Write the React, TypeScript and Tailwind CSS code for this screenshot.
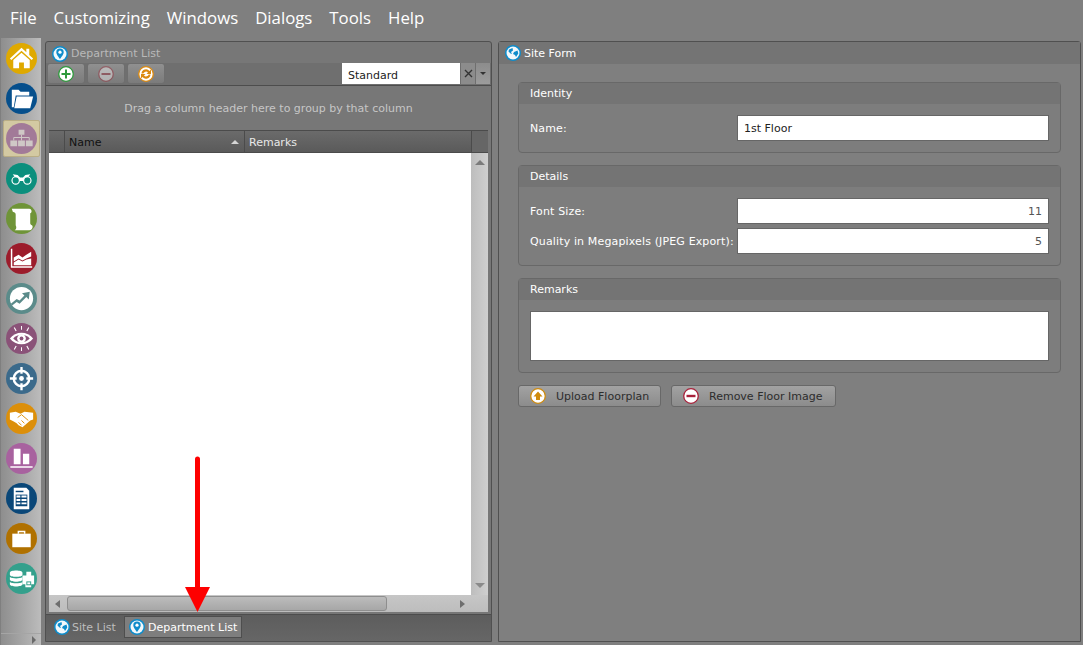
import type { ReactNode } from "react";

const menuItems = ["File", "Customizing", "Windows", "Dialogs", "Tools", "Help"];

function Circle({ color, children }: { color: string; children: ReactNode }) {
  return (
    <svg width="31" height="31" viewBox="0 0 32 32" className="block">
      <circle cx="16" cy="16" r="16" fill={color} />
      {children}
    </svg>
  );
}

const navIcons: ReactNode[] = [
  <Circle color="#dfa900" key="home">
    <path d="M4 16 16 5l5 4.500V6h3v6.500l4 3.500-1.500 1.500L16 8 5.500 17.500Z" fill="#fff" />
    <path d="M7.500 17.500 16 10l8.500 7.500V26H18.500v-6h-5v6H7.500Z" fill="#fff" />
  </Circle>,
  <Circle color="#064f8c" key="folder">
    <path d="M6 7h7l2 2h9v4H10L8 25H6Z" fill="#fff" />
    <path d="M11 14h17l-3 12H8.500Z" fill="#fff" />
  </Circle>,
  <Circle color="#a27a98" key="org">
    <path d="M13 7h6v5h-6ZM4.500 18h7v6h-7ZM12.500 18h7v6h-7ZM20.500 18h7v6h-7Z" fill="#cfc8c6" />
    <path d="M15.500 12h1v3h-1ZM8 14.500h16v1H8ZM7.500 15h1v3h-1ZM15.500 15h1v3h-1ZM23.500 15h1v3h-1Z" fill="#cfc8c6" />
  </Circle>,
  <Circle color="#0b8f7d" key="binoculars">
    <circle cx="10" cy="18" r="3.800" fill="none" stroke="#fff" strokeWidth="1.200" />
    <circle cx="22" cy="18" r="3.800" fill="none" stroke="#fff" strokeWidth="1.200" />
    <path d="M7 11.500l5 1 2.500 2.500h3l2.500-2.500 5-1-2 3-3.500.5-1.500 3.500h-4L12.500 15 9 14.500Z" fill="#fff" />
  </Circle>,
  <Circle color="#6f9438" key="scroll">
    <path d="M6 6h18c3 0 3 4.500 1 4.500V21c0 2 2.500 1.500 2.500 3.500S26 28 24 28H9c2-1 2-3 1-5v-11c0-2-1-2-3-3Z" fill="#fff" />
  </Circle>,
  <Circle color="#9c1c2b" key="area-chart">
    <path d="M5 6h1.500v18H27v1.500H5Z" fill="#fff" />
    <path d="M8 15l5-3 4 3 4-3 5-3v5l-5 2-4 2-4-2-5 3Z" fill="#fff" />
    <path d="M8 23v-3l5-3 4 2 4-2 5-1v7Z" fill="#fff" />
  </Circle>,
  <Circle color="#5b8b8a" key="trend">
    <circle cx="16" cy="16" r="12" fill="#fff" />
    <path d="M5 21.500l6-5 3 1.500 5-5-2.500-2.500 8-1.500-1 8-2.500-2.500-7 7-3-2-5 4Z" fill="#5b8b8a" />
  </Circle>,
  <Circle color="#8a5278" key="eye">
    <path d="M4 16c6-8 18-8 24 0-6 8-18 8-24 0Z" fill="#fff" />
    <path d="M7.500 16c4-5 13-5 17 0-4 5-13 5-17 0Z" fill="#8a5278" />
    <circle cx="16" cy="16" r="4.500" fill="#fff" />
    <circle cx="16" cy="16" r="2" fill="#8a5278" />
    <path d="M15.500 3h1v4h-1ZM8 5l1-.5 2 3.500-1 .5ZM24 5l-1-.5-2 3.500 1 .5ZM15.500 25h1v4h-1ZM8 27l1 .5 2-3.500-1-.5ZM24 27l-1 .5-2-3.500 1-.5Z" fill="#fff" />
  </Circle>,
  <Circle color="#3b6a8b" key="target">
    <circle cx="16" cy="16" r="8" fill="none" stroke="#fff" strokeWidth="2.500" />
    <circle cx="16" cy="16" r="2.500" fill="#fff" />
    <path d="M14.800 4h2.400v7h-2.400ZM14.800 21h2.400v7h-2.400ZM4 14.800h7v2.400H4ZM21 14.800h7v2.400h-7Z" fill="#fff" />
  </Circle>,
  <Circle color="#dc8f0a" key="handshake">
    <path d="M4 10l6-1 5 2 4-2 9 1v7l-3 1-8 7-2-1-2-1-2-2-3-2-4-2Z" fill="#fff" />
    <path d="M12 15l4-3 7 6M13 20l3 3M16 18l3 3" fill="none" stroke="#dc8f0a" strokeWidth="1" />
  </Circle>,
  <Circle color="#a8629f" key="bars">
    <path d="M8 6h7v16H8ZM17.500 11H24v11h-6.500ZM4.500 24h23v1.500h-23Z" fill="#fff" />
  </Circle>,
  <Circle color="#0a4778" key="table">
    <path d="M8 5h13l3 3v19H8Z" fill="#fff" />
    <path d="M10 12h12v12H10Z" fill="#0a4778" />
    <path d="M10.800 13h4v2h-4ZM16 13h5.200v2H16ZM10.800 16.500h4v2h-4ZM16 16.500h5.200v2H16ZM10.800 20h4v2h-4ZM16 20h5.200v2H16Z" fill="#fff" />
    <path d="M10 8h8v1.500h-8Z" fill="#0a4778" />
  </Circle>,
  <Circle color="#b07100" key="briefcase">
    <path d="M12 8h8v3h-1.500V9.500h-5V11H12Z" fill="#fff" />
    <path d="M6.500 11h19v14h-19Z" fill="#fff" />
  </Circle>,
  <Circle color="#34a08c" key="db-print">
    <path d="M4 10c0-3 13-3 13 0v2c0 3-13 3-13 0ZM4 14.500c3 2 10 2 13 0V17c0 3-13 3-13 0ZM4 19.500c3 2 10 2 13 0V22c0 3-13 3-13 0Z" fill="#fff" />
    <path d="M21 9h5v4h3v9h-3v3h-6v-3h-3v-9h4Z" fill="#fff" />
    <path d="M21 19h5v4h-5Z" fill="#34a08c" />
    <path d="M22 20h3v2h-3Z" fill="#fff" />
  </Circle>,
];

function PinBadge() {
  return (
    <svg width="16" height="16" viewBox="0 0 16 16" className="block shrink-0">
      <circle cx="8" cy="8" r="8" fill="#0e8ccb" />
      <circle cx="8" cy="8" r="6.500" fill="#f2f8fb" />
      <path d="M8 2.500a3.700 3.700 0 0 1 3.700 3.700C11.700 8.500 9 11.500 8 13c-1-1.500-3.700-4.500-3.700-6.800A3.700 3.700 0 0 1 8 2.500Z" fill="#0e8ccb" />
      <circle cx="8" cy="6.200" r="1.600" fill="#fff" />
    </svg>
  );
}

function GlobeBadge() {
  return (
    <svg width="16" height="16" viewBox="0 0 16 16" className="block shrink-0">
      <circle cx="8" cy="8" r="8" fill="#0e8ccb" />
      <circle cx="8" cy="8" r="6.500" fill="#f2f8fb" />
      <path d="M4 4.500 7.500 3 8 5.500 6 7 7 9 5.500 8.500 3.500 6.500ZM9 7l3.500-1.500.8 3-2.300 3.500-1-2L8 9Z" fill="#0e8ccb" />
    </svg>
  );
}

function RoundIcon({ color, children }: { color: string; children: ReactNode }) {
  return (
    <svg width="16" height="16" viewBox="0 0 16 16" className="block">
      <circle cx="8" cy="8" r="7.300" fill="#fff" stroke={color} strokeWidth="1.300" />
      {children}
    </svg>
  );
}

function ToolButton({ children, dim }: { children: ReactNode; dim?: boolean }) {
  return (
    <div className="flex h-[21px] w-[38px] items-center justify-center rounded-[3px] border border-[#6e6e6e] bg-gradient-to-b from-[#909090] to-[#7b7b7b]">
      <div className={dim ? "opacity-40" : ""}>{children}</div>
    </div>
  );
}

function Fieldset({
  title,
  className,
  children,
}: {
  title: string;
  className: string;
  children: ReactNode;
}) {
  return (
    <section className={`rounded-[4px] border border-[#686868] bg-[#7d7d7d] ${className}`}>
      <h2 className="flex h-[21px] items-center bg-[#747474] pl-[11px] pt-[2px] text-[11px] font-normal text-white">
        {title}
      </h2>
      {children}
    </section>
  );
}

function FormRow({ label, value, right }: { label: string; value: string; right?: boolean }) {
  return (
    <div className="flex h-[26px] items-center pl-[11px] pr-[11px]">
      <label className="w-[207px] whitespace-nowrap pt-[2px] text-[11px] tracking-[0.14px] text-white">
        {label}
      </label>
      <div
        className={`flex h-[26px] flex-1 items-center border border-[#666] bg-white px-[6px] pt-[2px] text-[11px] ${right ? "justify-end text-[#555]" : "text-[#222]"}`}
      >
        {value}
      </div>
    </div>
  );
}

function ActionButton({
  icon,
  label,
  className,
}: {
  icon: ReactNode;
  label: string;
  className: string;
}) {
  return (
    <button
      className={`flex h-[22px] items-center rounded-[3px] border border-[#686868] bg-gradient-to-b from-[#a2a2a2] to-[#8c8c8c] pl-[11px] text-[11px] text-[#2d2d2d] ${className}`}
    >
      {icon}
      <span className="ml-[10px] whitespace-nowrap pt-[2px]">{label}</span>
    </button>
  );
}

export default function App() {
  return (
    <div className="relative flex h-[645px] w-[1083px] flex-col overflow-hidden bg-[#7f7f7f] font-['DejaVu_Sans',sans-serif]">
      <nav className="flex h-[38px] shrink-0 items-center gap-[17px] pl-[10px] pb-[2px] font-['Open_Sans',sans-serif] text-[16.8px] text-white">
        {menuItems.map((m) => (
          <span key={m}>{m}</span>
        ))}
      </nav>

      <div className="flex min-h-0 flex-1">
        <aside className="ml-px flex w-[40px] shrink-0 flex-col bg-gradient-to-r from-[#8e8e8e] to-[#bcbcbc]">
          <div className="flex flex-1 flex-col items-center">
            {navIcons.map((icon, i) => (
              <div key={i} className="flex h-[40px] w-[38px] items-center justify-center">
                <div
                  className={`flex items-center justify-center ${i === 2 ? "h-[37px] w-[37px] rounded-[2px] border border-[#b9ad85] bg-[#d3c9a2]" : ""}`}
                >
                  {icon}
                </div>
              </div>
            ))}
          </div>
          <div className="flex h-[12px] items-center justify-end border-t border-[#a5a5a5] pr-[5px]">
            <div className="h-0 w-0 border-y-[4px] border-l-[4px] border-y-transparent border-l-[#6a6a6a]" />
          </div>
        </aside>

        <main className="flex min-w-0 flex-1 gap-[6px] pl-[4px] pr-[2px] pt-[3px] pb-[3px]">
          {/* left panel */}
          <section className="flex w-[447px] flex-col rounded-t-[3px] border border-[#505050] bg-[#777]">
            <header className="flex h-[21px] shrink-0 items-center gap-[3px] pl-[6px] pt-[2px] text-[11px] text-[#b9b9b9]">
              <PinBadge />
              <span className="pt-[2px]">Department List</span>
            </header>
            <div className="flex h-[22px] shrink-0 items-start bg-[#6f6f6f] pl-px pr-px">
              <div className="flex gap-[2px]">
                <ToolButton>
                  <RoundIcon color="#2e9a3c">
                    <path d="M7 3.500h2V7h3.500v2H9v3.500H7V9H3.500V7H7Z" fill="#2e9a3c" />
                  </RoundIcon>
                </ToolButton>
                <ToolButton dim>
                  <RoundIcon color="#9c2030">
                    <path d="M3.500 7h9v2h-9Z" fill="#9c2030" />
                  </RoundIcon>
                </ToolButton>
                <ToolButton>
                  <RoundIcon color="#dc8a10">
                    <path d="M3.500 7.500A4.500 4.500 0 0 1 11.500 5L13 3.500V8H8.500L10 6.500A2.800 2.800 0 0 0 5.300 7.500ZM12.500 8.500A4.500 4.500 0 0 1 4.500 11L3 12.500V8h4.500L6 9.500A2.800 2.800 0 0 0 10.700 8.500Z" fill="#dc8a10" />
                  </RoundIcon>
                </ToolButton>
              </div>
              <div className="ml-auto flex h-[21px] items-stretch">
                <div className="flex w-[118px] items-center bg-white pl-[6px] pt-[5px] text-[11px] text-[#222]">
                  Standard
                </div>
                <div className="ml-px flex w-[14px] items-center justify-center bg-[#8c8c8c] text-[#333]">
                  <svg width="9" height="9" viewBox="0 0 9 9">
                    <path d="M1 1l7 7M8 1 1 8" stroke="#333" strokeWidth="1.400" />
                  </svg>
                </div>
                <div className="ml-px flex w-[14px] items-center justify-center bg-gradient-to-b from-[#8c8c8c] to-[#9c9c9c]">
                  <div className="h-0 w-0 border-x-[3px] border-t-[3px] border-x-transparent border-t-[#333]" />
                </div>
              </div>
            </div>
            <div className="flex min-h-0 flex-1 flex-col border-y border-[#4d4d4d] px-[3px] pb-[2px]">
              <div className="flex h-[44px] shrink-0 items-center justify-center pt-[2px] text-[11px] text-[#c6c6c6]">
                Drag a column header here to group by that column
              </div>
              <div className="flex h-[23px] shrink-0 border-y border-[#4b4b4b] bg-gradient-to-b from-[#6b6b6b] to-[#5a5a5a] text-[11px]">
                <div className="w-[16px] border-r border-[#4b4b4b]" />
                <div className="flex w-[180px] items-center justify-between border-r border-[#4b4b4b] pl-[4px] pr-[5px] text-[#111]">
                  <span className="pt-[3px]">Name</span>
                  <div className="h-0 w-0 border-x-[4px] border-b-[4px] border-x-transparent border-b-[#d5d5d5]" />
                </div>
                <div className="flex w-[227px] items-center border-r border-[#4b4b4b] pl-[4px] pt-[3px] text-[#e8e8e8]">
                  Remarks
                </div>
                <div className="flex-1 bg-[#666]" />
              </div>
              <div className="flex min-h-0 flex-1 bg-white">
                <div className="flex-1" />
                <div className="flex w-[17px] flex-col items-center justify-between bg-gradient-to-r from-[#bdbdbd] to-[#cfcfcf] py-[7px]">
                  <div className="h-0 w-0 border-x-[5px] border-b-[5px] border-x-transparent border-b-[#7b7b7b]" />
                  <div className="h-0 w-0 border-x-[5px] border-t-[5px] border-x-transparent border-t-[#8a8a8a]" />
                </div>
              </div>
              <div className="flex h-[17px] shrink-0 items-center bg-gradient-to-b from-[#c6c6c6] to-[#bdbdbd] pl-[6px] pr-[6px]">
                <div className="h-0 w-0 border-y-[4px] border-r-[5px] border-y-transparent border-r-[#6e6e6e]" />
                <div className="ml-[7px] h-[15px] w-[320px] rounded-[3px] border border-[#8e8e8e] bg-gradient-to-b from-[#bcbcbc] to-[#a7a7a7]" />
                <div className="ml-auto mr-[17px] h-0 w-0 border-y-[4px] border-l-[5px] border-y-transparent border-l-[#6e6e6e]" />
              </div>
            </div>
            <div className="flex h-[26px] shrink-0 items-stretch bg-gradient-to-b from-[#5d5d5d] to-[#666] pb-[3px] pt-px text-[11px]">
              <div className="flex w-[78px] items-center gap-[2px] pl-[8px] text-[#bdbdbd]">
                <GlobeBadge />
                <span className="pt-[2px]">Site List</span>
              </div>
              <div className="flex items-center gap-[3px] border border-[#4e4e4e] bg-[#7e7e7e] pl-[4px] pr-[4px] text-white">
                <PinBadge />
                <span className="pt-[2px]">Department List</span>
              </div>
            </div>
          </section>

          {/* right panel */}
          <section className="flex flex-1 flex-col rounded-t-[3px] border border-[#505050] bg-[#7f7f7f]">
            <header className="flex h-[22px] shrink-0 items-center gap-[3px] bg-[#747474] pl-[6px] text-[11px] text-white">
              <GlobeBadge />
              <span className="pt-[2px]">Site Form</span>
            </header>
            <div className="flex flex-col px-[19px] pt-[18px]">
              <Fieldset title="Identity" className="h-[71px]">
                <div className="pt-[11px]">
                  <FormRow label="Name:" value="1st Floor" />
                </div>
              </Fieldset>
              <Fieldset title="Details" className="mt-[12px] h-[101px]">
                <div className="flex flex-col gap-[4px] pt-[11px]">
                  <FormRow label="Font Size:" value="11" right />
                  <FormRow label="Quality in Megapixels (JPEG Export):" value="5" right />
                </div>
              </Fieldset>
              <Fieldset title="Remarks" className="mt-[12px] h-[95px]">
                <div className="pl-[11px] pr-[11px] pt-[11px]">
                  <div className="h-[50px] border border-[#666] bg-white" />
                </div>
              </Fieldset>
              <div className="mt-[12px] flex gap-[10px]">
                <ActionButton
                  className="w-[143px]"
                  label="Upload Floorplan"
                  icon={
                    <RoundIcon color="#cf8a0c">
                      <path d="M8 3.500 12.500 8.500H10V12H6V8.500H3.500Z" fill="#cf8a0c" />
                    </RoundIcon>
                  }
                />
                <ActionButton
                  className="w-[165px]"
                  label="Remove Floor Image"
                  icon={
                    <RoundIcon color="#a8203a">
                      <path d="M3.500 6.800h9v2.400h-9Z" fill="#a8203a" />
                    </RoundIcon>
                  }
                />
              </div>
            </div>
          </section>
        </main>
      </div>

      {/* red annotation arrow */}
      <svg width="30" height="160" viewBox="0 0 30 160" className="absolute left-[183px] top-[453px]">
        <path d="M14.500 6v134" stroke="#fe0000" strokeWidth="5" strokeLinecap="round" />
        <path d="M2 134h25l-12.500 25Z" fill="#fe0000" />
      </svg>
    </div>
  );
}
